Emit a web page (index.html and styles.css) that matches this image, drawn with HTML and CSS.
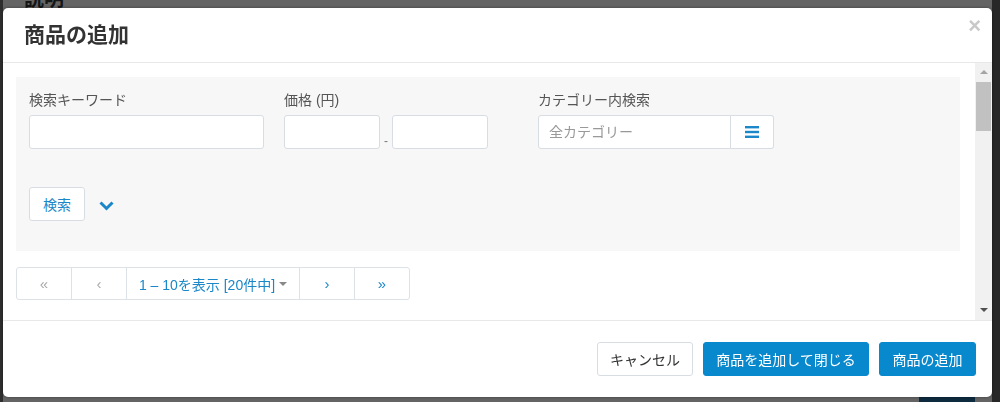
FILE: index.html
```html
<!DOCTYPE html>
<html lang="ja">
<head>
    <meta charset="UTF-8">
    <meta name="viewport" content="width=device-width, initial-scale=1.0">
    <title>商品の追加</title>
    <link rel="stylesheet" href="styles.css">
</head>
<body>
    <!-- page behind the dialog -->
    <div class="page">
        <h2 class="page-title">説明</h2>
        <div class="page-bottom">
            <span class="page-save"></span>
        </div>
    </div>

    <div class="modal">
        <div class="modal-header">
            <h3>商品の追加</h3>
            <span class="close">&times;</span>
        </div>

        <div class="modal-body">
            <div class="scroll-area">
                <div class="search-panel">
                    <div class="fields">
                        <div class="field field-keyword">
                            <label>検索キーワード</label>
                            <input type="text" class="input">
                        </div>
                        <div class="field field-price">
                            <label>価格 (円)</label>
                            <div class="price-range">
                                <input type="text" class="input">
                                <span class="dash">-</span>
                                <input type="text" class="input">
                            </div>
                        </div>
                        <div class="field field-category">
                            <label>カテゴリー内検索</label>
                            <div class="category-group">
                                <input type="text" class="input" placeholder="全カテゴリー">
                                <button class="category-btn">
                                    <svg width="14" height="12" viewBox="0 0 14 12"><rect y="0" width="14" height="2.4" fill="#1a87c9"/><rect y="4.8" width="14" height="2.4" fill="#1a87c9"/><rect y="9.6" width="14" height="2.4" fill="#1a87c9"/></svg>
                                </button>
                            </div>
                        </div>
                    </div>
                    <div class="search-row">
                        <button class="btn btn-light">検索</button>
                        <svg class="chevron" width="15" height="10" viewBox="0 0 15 10"><path d="M1.5 1.5 L7.5 7.5 L13.5 1.5" fill="none" stroke="#1a87c9" stroke-width="3"/></svg>
                    </div>
                </div>

                <div class="pager">
                    <span class="pager-item muted">&laquo;</span>
                    <span class="pager-item muted">&lsaquo;</span>
                    <span class="pager-item pager-current">1 – 10を表示 [20件中] <span class="caret"></span></span>
                    <span class="pager-item">&rsaquo;</span>
                    <span class="pager-item">&raquo;</span>
                </div>
            </div>

            <div class="scrollbar">
                <span class="arrow-up"></span>
                <span class="thumb"></span>
                <span class="track"></span>
                <span class="arrow-down"></span>
            </div>
        </div>

        <div class="modal-footer">
            <button class="btn btn-light">キャンセル</button>
            <button class="btn btn-primary">商品を追加して閉じる</button>
            <button class="btn btn-primary">商品の追加</button>
        </div>
    </div>
</body>
</html>
```

FILE: styles.css
```css
body {
    margin: 0;
    font-family: "Liberation Sans", "Noto Sans CJK JP", sans-serif;
    font-size: 14px;
    color: #333;
    background-color: #646464;
}
.page {
    height: 100vh;
    display: flex;
    flex-direction: column;
    justify-content: space-between;
    border-left: 3px solid #2e2e2e;
    border-right: 8px solid #272727;
    box-sizing: border-box;
}
.page-title {
    margin: -12px 0 0 21px;
    font-size: 20px;
    line-height: 22px;
    color: #151515;
}
.page-bottom {
    display: flex;
    justify-content: flex-end;
    padding-right: 17px;
}
.page-save {
    width: 56px;
    height: 5px;
    background: #0d2a3e;
}

/* dialog */
.modal {
    position: fixed;
    top: 8px;
    left: 3px;
    width: 989px;
    height: 389px;
    background: #fff;
    border-radius: 5px;
    box-shadow: 0 0 3px rgba(0, 0, 0, 0.4);
    display: flex;
    flex-direction: column;
    overflow: hidden;
}
.modal-header {
    height: 54px;
    border-bottom: 1px solid #e8e8e8;
    display: flex;
    justify-content: space-between;
    align-items: flex-start;
    padding: 0 11px 0 21px;
}
.modal-header h3 {
    margin: 14px 0 0;
    font-size: 21px;
    line-height: 26px;
    font-weight: bold;
    color: #333;
}
.close {
    margin-top: 5px;
    font-size: 22px;
    font-weight: bold;
    color: #c9c9c9;
    line-height: 26px;
}
.modal-body {
    flex: 1;
    display: flex;
    min-height: 0;
}
.scroll-area {
    flex: 1;
    padding: 14px 15px 0 13px;
}
.modal-footer {
    height: 77px;
    border-top: 1px solid #e8e8e8;
    display: flex;
    justify-content: flex-end;
    align-items: flex-start;
    gap: 10px;
    padding: 21px 16px 0 0;
    box-sizing: border-box;
}

/* search panel */
.search-panel {
    height: 174px;
    box-sizing: border-box;
    background: #f7f7f7;
    padding: 13px 13px 30px;
}
.fields {
    display: flex;
}
.field label {
    display: block;
    line-height: 20px;
    margin-bottom: 5px;
    color: #555;
}
.input {
    height: 34px;
    box-sizing: border-box;
    border: 1px solid #d7dde3;
    border-radius: 3px;
    background: #fff;
    padding: 0 10px;
    font-family: inherit;
    font-size: 14px;
}
.input::placeholder {
    color: #999;
}
.field-keyword {
    width: 255px;
}
.field-keyword .input {
    width: 235px;
}
.field-price {
    width: 254px;
}
.price-range {
    display: flex;
    align-items: flex-end;
}
.price-range .input {
    width: 96px;
}
.dash {
    width: 12px;
    text-align: center;
    color: #777;
    font-size: 12px;
    line-height: 16px;
}
.category-group {
    display: flex;
    width: 236px;
}
.category-group .input {
    width: 193px;
    border-radius: 3px 0 0 3px;
}
.category-btn {
    width: 43px;
    height: 34px;
    border: 1px solid #d7dde3;
    border-left: none;
    border-radius: 0 3px 3px 0;
    background: #fff;
    display: flex;
    align-items: center;
    justify-content: center;
    padding: 0;
}
.search-row {
    margin-top: 38px;
    display: flex;
    align-items: center;
    gap: 14px;
}
.chevron {
    margin-top: 4px;
}

/* buttons */
.btn {
    height: 34px;
    padding: 0;
    border-radius: 3px;
    font-family: inherit;
    font-size: 14px;
    white-space: nowrap;
    cursor: pointer;
}
.btn-light {
    background: #fff;
    border: 1px solid #d7dde3;
    color: #333;
}
.search-row .btn-light {
    color: #1a87c9;
    width: 56px;
}
.btn-primary {
    background: #0888cd;
    border: 1px solid #0888cd;
    color: #fff;
}
.modal-footer .btn-light {
    width: 96px;
}
.modal-footer .btn-primary:nth-child(2) {
    width: 166px;
}
.modal-footer .btn-primary:nth-child(3) {
    width: 97px;
}

/* pagination */
.pager {
    margin-top: 16px;
    display: inline-flex;
    border: 1px solid #dde2e7;
    border-radius: 3px;
    height: 33px;
    box-sizing: border-box;
}
.pager-item {
    width: 54px;
    display: flex;
    align-items: center;
    justify-content: center;
    color: #1a87c9;
    font-size: 15px;
    border-left: 1px solid #dde2e7;
}
.pager-item:first-child {
    border-left: none;
}
.pager-item.muted {
    color: #aaa;
}
.pager-current {
    width: 172px;
    font-size: 14px;
    gap: 4px;
}
.caret {
    width: 0;
    height: 0;
    border-left: 4px solid transparent;
    border-right: 4px solid transparent;
    border-top: 4px solid #888;
}

/* scrollbar column */
.scrollbar {
    width: 17px;
    background: #f1f1f1;
    display: flex;
    flex-direction: column;
    align-items: center;
}
.arrow-up,
.arrow-down {
    width: 0;
    height: 0;
    border-left: 4px solid transparent;
    border-right: 4px solid transparent;
}
.arrow-up {
    margin-top: 7px;
    border-bottom: 4px solid #a3a3a3;
}
.arrow-down {
    margin-bottom: 8px;
    border-top: 4px solid #505050;
}
.thumb {
    margin-top: 8px;
    width: 15px;
    height: 49px;
    background: #c1c1c1;
}
.track {
    flex: 1;
}
```
